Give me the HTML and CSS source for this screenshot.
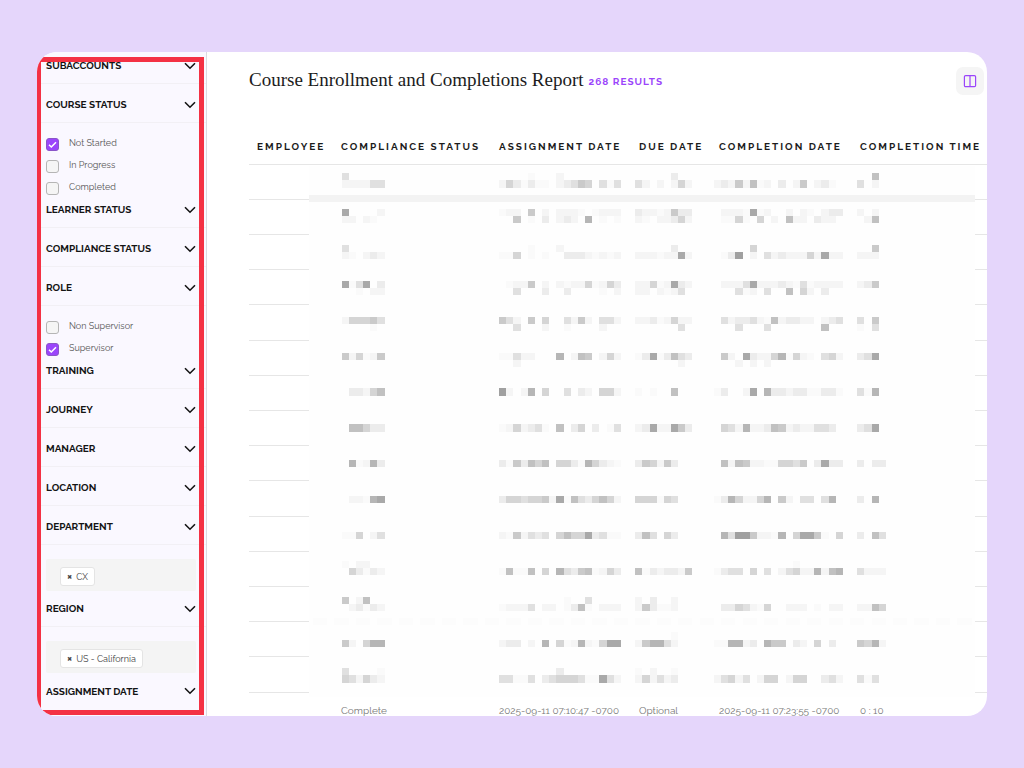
FILE: index.html
```html
<!DOCTYPE html>
<html lang="en">

<head>
    <meta charset="UTF-8">
    <meta name="viewport" content="width=device-width, initial-scale=1.0">
    <title>Course Enrollment and Completions Report</title>
    <link rel="stylesheet" href="styles.css">
</head>

<body>
    <svg class="defs" width="0" height="0">
        <symbol id="chevron" viewBox="0 0 12 8">
            <path d="M1 1.2 L6 6.2 L11 1.2" fill="none" stroke="currentColor" stroke-width="1.6" />
        </symbol>
    </svg>

    <div class="frame">
        <aside class="sidebar">
            <div class="filters">
                <button class="filter-title">SUBACCOUNTS<svg><use href="#chevron" /></svg></button>
                <button class="filter-title">COURSE STATUS<svg><use href="#chevron" /></svg></button>
                <div class="options">
                    <label><input type="checkbox" checked><span>Not Started</span></label>
                    <label><input type="checkbox"><span>In Progress</span></label>
                    <label><input type="checkbox"><span>Completed</span></label>
                </div>
                <button class="filter-title">LEARNER STATUS<svg><use href="#chevron" /></svg></button>
                <button class="filter-title">COMPLIANCE STATUS<svg><use href="#chevron" /></svg></button>
                <button class="filter-title">ROLE<svg><use href="#chevron" /></svg></button>
                <div class="options">
                    <label><input type="checkbox"><span>Non Supervisor</span></label>
                    <label><input type="checkbox" checked><span>Supervisor</span></label>
                </div>
                <button class="filter-title">TRAINING<svg><use href="#chevron" /></svg></button>
                <button class="filter-title">JOURNEY<svg><use href="#chevron" /></svg></button>
                <button class="filter-title">MANAGER<svg><use href="#chevron" /></svg></button>
                <button class="filter-title">LOCATION<svg><use href="#chevron" /></svg></button>
                <button class="filter-title">DEPARTMENT<svg><use href="#chevron" /></svg></button>
                <div class="tags">
                    <button class="tag"><b>×</b>CX</button>
                </div>
                <button class="filter-title">REGION<svg><use href="#chevron" /></svg></button>
                <div class="tags">
                    <button class="tag"><b>×</b>US - California</button>
                </div>
                <button class="filter-title">ASSIGNMENT DATE<svg><use href="#chevron" /></svg></button>
            </div>
            <div class="highlight"></div>
        </aside>

        <main class="report">
            <header class="report-header">
                <h1>Course Enrollment and Completions Report</h1>
                <span class="results">268 RESULTS</span>
                <button class="columns-button" aria-label="Columns">
                    <svg viewBox="0 0 14 14" width="14" height="14" fill="none" stroke="currentColor" stroke-width="1.2">
                        <rect x="1.4" y="1.6" width="11.2" height="11" rx="1.2" />
                        <path d="M7 1.6 V12.6" />
                    </svg>
                </button>
            </header>

            <div class="table-wrap">
                <table>
                    <colgroup>
                        <col class="col-employee">
                        <col class="col-status">
                        <col class="col-assigned">
                        <col class="col-due">
                        <col class="col-completed">
                        <col>
                    </colgroup>
                    <thead>
                        <tr>
                            <th>EMPLOYEE</th>
                            <th>COMPLIANCE STATUS</th>
                            <th>ASSIGNMENT DATE</th>
                            <th>DUE DATE</th>
                            <th>COMPLETION DATE</th>
                            <th>COMPLETION TIME</th>
                        </tr>
                    </thead>
                    <tbody id="rows">
                        <tr>
                            <td></td>
                            <td>Complete</td>
                            <td>2025-09-11 07:10:47 -0700</td>
                            <td>Optional</td>
                            <td>2025-09-11 07:23:55 -0700</td>
                            <td>0 : 10</td>
                        </tr>
                    </tbody>
                </table>
                <svg class="mosaic" id="mosaic" viewBox="-4.55 -1 93 74" preserveAspectRatio="none"></svg>
            </div>
        </main>
    </div>

    <script>
        // Shade of each level, 0 is the lightest
        const shades = ['#fafafa', '#f5f5f5', '#ececec', '#e0e0e0', '#d5d5d5', '#cacaca', '#c1c1c1', '#b6b6b6', '#a9a9a9', '#a0a0a0'];

        // First square of each table column
        const starts = [0, 22, 41, 52, 72];

        // Line number, then the levels for each table column
        const mosaic = [
            [0, '3', '....0...1', '.....2', '', '..6'],
            [1, '111133', '1420200.12354.303', '31.1.141', '12151601.2.15.120', '3.1'],
            [5, '8....1', '011.5.1.1110.0111', '21101522', '.1110801..1.10.122', '1.1'],
            [6, '11.10', '..5.0.2.121.7.0.0', '10.11241', '.0040.4.1.611.211', '.16'],
            [10, '3', '....0...1', '.....2', '.....4', '..5'],
            [11, '10.121', '004.0.0..22210101', '11101181', '.029.1.31211141811', '111'],
            [15, '8038.2', '.0115.1.101140142', '11401821', '.11138111210301111', '125'],
            [16, '..0.11', '..3...2..2....0.1', '11.1013', '...301.3..6.41.2', ''],
            [20, '144453', '531.5.4..3151.331', '11201411', '.3122310612211.123', '3.5'],
            [21, '....0', '..3...1..0....1', '......3', '...3...3.......6', '0.3'],
            [25, '514015', '00311...7.165.141', '02802632', '.51.8211470410.341', '238'],
            [26, '', '..1', '......1', '...1.1.1', ''],
            [30, '.22146', '91.17.4..3.21.441', '0.0..6', '02..18.72212200220', '307'],
            [35, '.66422', '0141230.6.24.2.03', '12811852', '.4317112651211332', '238'],
            [40, '.70172', '2052646.442074210', '254152', '.616511004435.2822', '2.22'],
            [45, '.11078', '24434451806324641', '444043', '02741147.51.33.37', '2.7'],
            [50, '004.13', '1051323.464482300', '263.42', '.739951107.48850.4', '2.63'],
            [54, '0.11', '', '', '...........0', ''],
            [55, '.42021', '06006.4.732560142', '60212215', '0233.4.3.134117167', '3111'],
            [59, '5.16', '.........0..3', '1.2..1', '', ''],
            [60, '.12021', '01113.11.0260.111', '152001', '.2243104..111.0.11', '1164'],
            [64, '', '', '.....0', '', ''],
            [65, '51.477', '122.1.7.401710488', '157731', '007712.755.21.4.2', '5471'],
            [69, '3....0', '........2', '0.1..0', '', ''],
            [70, '431421', '33003.23444300831', '141312', '13413.144.144..231', '303']
        ];

        const svg = document.getElementById('mosaic');

        function addRect(x, y, width, fill) {
            const rect = document.createElementNS('http://www.w3.org/2000/svg', 'rect');
            rect.setAttribute('x', x);
            rect.setAttribute('y', y);
            rect.setAttribute('width', width);
            rect.setAttribute('height', 1);
            rect.setAttribute('fill', fill);
            svg.appendChild(rect);
        }

        // Bar under the first row
        addRect(-4.55, 3, 93, '#f3f3f3');

        // Faint trace between the last rows
        for (let x = -4; x < 88; x += 3) {
            addRect(x, 62, 2, '#fcfcfc');
        }

        mosaic.forEach(([line, ...columns]) => {
            columns.forEach((levels, i) => {
                [...levels].forEach((level, n) => {
                    if (level !== '.') {
                        addRect(starts[i] + n, line, 1, shades[level]);
                    }
                });
            });
        });

        // Hidden rows above the last one
        const rows = document.getElementById('rows');
        for (let i = 0; i < 15; i++) {
            const row = document.createElement('tr');
            row.innerHTML = '<td></td>'.repeat(6);
            rows.prepend(row);
        }
    </script>
</body>

</html>
```
FILE: styles.css
```css
* {
    box-sizing: border-box;
}

body {
    margin: 0;
    padding: 52px 37px;
    height: 100vh;
    background-color: #e5d6fb;
    color: #1c1c1c;
    font-family: Raleway, Lato, sans-serif;
}

button {
    font-family: inherit;
    cursor: pointer;
}

.defs {
    position: absolute;
}

.frame {
    display: flex;
    height: 100%;
    background-color: #fff;
    border-radius: 20px;
    overflow: hidden;
}

/* Sidebar */
.sidebar {
    position: relative;
    flex: 0 0 170px;
    background-color: #faf8ff;
    border-right: 1px solid #dcdae0;
    overflow: hidden;
}

/* The list is scrolled a little */
.filters {
    margin-top: -7px;
}

.filter-title {
    display: flex;
    align-items: center;
    justify-content: space-between;
    width: 100%;
    height: 39px;
    padding: 3px 10px 0 9px;
    border: 0;
    border-bottom: 1px solid #f2f0f5;
    background: none;
    color: #141414;
    font-size: 10px;
    font-weight: bold;
}

.filter-title svg {
    width: 12px;
    height: 8px;
}

.filter-title:last-child {
    border-bottom: 0;
}

.options {
    padding: 10px 9px 0;
    margin-bottom: -10px;
}

.options label {
    display: flex;
    align-items: center;
    gap: 10px;
    height: 22px;
    color: #555;
    font-size: 9px;
}

.options span {
    padding-bottom: 3px;
}

.options input {
    appearance: none;
    width: 13px;
    height: 13px;
    margin: 0;
    border: 1px solid #b5b5b5;
    border-radius: 3px;
    background-color: #f5f5f5;
}

.options input:checked {
    border-color: #8a55c8;
    background: #9b45fb url("data:image/svg+xml,%3Csvg xmlns='http://www.w3.org/2000/svg' viewBox='0 0 11 11'%3E%3Cpath d='M2 5.8 L4.3 8 L9 3.2' fill='none' stroke='white' stroke-width='1.5'/%3E%3C/svg%3E") center / 11px no-repeat;
}

.tags {
    display: flex;
    height: 32px;
    margin: 14px 10px -3px 9px;
    padding: 8px 14px 5px;
    background-color: #f4f4f4;
    border-radius: 2px;
}

.tag {
    display: flex;
    align-items: center;
    gap: 4px;
    padding: 0 6px;
    border: 1px solid #e4e4e4;
    border-radius: 3px;
    background-color: #fff;
    color: #444;
    font-size: 9px;
}

.tag b {
    font-size: 11px;
}

.highlight {
    position: absolute;
    top: 5px;
    bottom: 1px;
    left: 0;
    right: 2px;
    border: 5px solid #f43144;
    border-left-width: 4px;
    pointer-events: none;
}

/* Report */
.report {
    flex: 1;
    min-width: 0;
    padding: 15px 0 0 42px;
}

.report-header {
    display: flex;
    align-items: center;
    gap: 5px;
    padding-right: 3px;
}

h1 {
    margin: 0;
    padding-bottom: 2px;
    font-family: Recoleta, "Liberation Serif", serif;
    font-size: 19px;
    font-weight: normal;
    line-height: 24px;
}

.results {
    color: #9b45fb;
    font-size: 10px;
    font-weight: bold;
    letter-spacing: 1px;
}

.columns-button {
    display: flex;
    align-items: center;
    justify-content: center;
    width: 28px;
    height: 28px;
    margin-left: auto;
    padding: 0;
    border: 0;
    border-radius: 7px;
    background-color: #f5f5f5;
    color: #9b45fb;
}

.table-wrap {
    position: relative;
    margin-top: 34px;
}

table {
    width: 100%;
    table-layout: fixed;
    border-collapse: separate;
    border-spacing: 0;
}

.col-employee {
    width: 84px;
}

.col-status {
    width: 158px;
}

.col-assigned {
    width: 140px;
}

.col-due {
    width: 80px;
}

.col-completed {
    width: 141px;
}

th,
td {
    height: 35px;
    padding: 0 0 0 8px;
    border-bottom: 1px solid #e6e6e6;
    text-align: left;
    white-space: nowrap;
}

th {
    height: 36px;
    font-size: 10px;
    letter-spacing: 2px;
}

td {
    color: #777;
    font-size: 10px;
}

tr:nth-child(5n) td {
    height: 36px;
}

/* Covers the employee data */
.mosaic {
    position: absolute;
    top: 37px;
    left: 60px;
    width: calc(100% - 72px);
    height: 531px;
    background-color: #fefefe;
    shape-rendering: crispEdges;
}
```
